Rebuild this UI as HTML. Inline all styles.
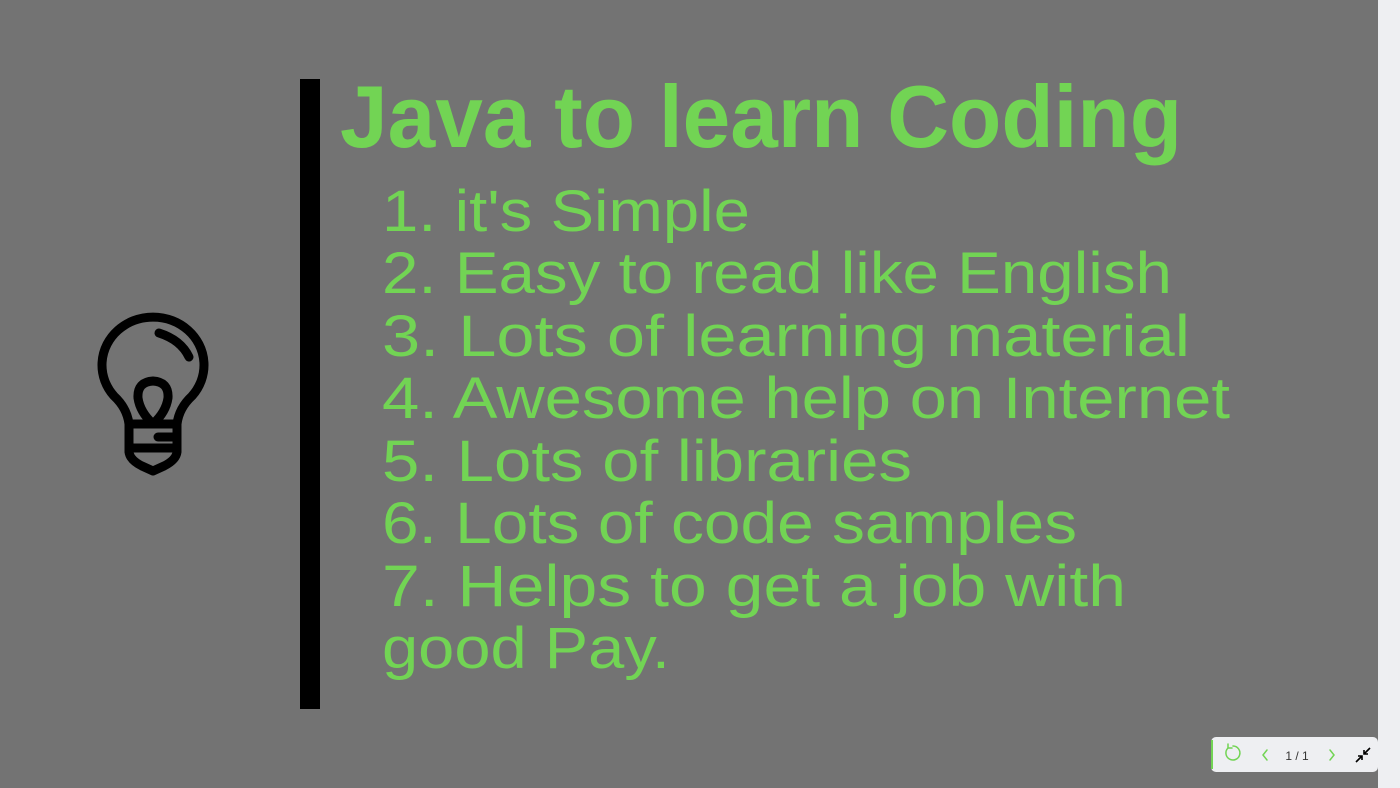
<!DOCTYPE html>
<html><head><meta charset="utf-8"><style>
html,body{margin:0;padding:0;width:1400px;height:788px;overflow:hidden;background:#737373}
svg{position:absolute;left:0;top:0}
</style></head><body>
<svg width="1400" height="788" viewBox="0 0 1400 788">
<rect x="0" y="0" width="1400" height="788" fill="#737373"/>
<rect x="1378" y="0" width="22" height="788" fill="#eeeff2"/>
<rect x="300" y="79" width="20" height="630" fill="#000"/>
<g font-family="Liberation Sans, sans-serif" fill="#72d454">
<text x="340" y="147" font-size="88" font-weight="bold" textLength="842" lengthAdjust="spacingAndGlyphs">Java to learn Coding</text>
<g font-size="58">
<text x="382" y="231" textLength="368" lengthAdjust="spacingAndGlyphs">1. it's Simple</text>
<text x="382" y="293" textLength="790" lengthAdjust="spacingAndGlyphs">2. Easy to read like English</text>
<text x="382" y="356" textLength="808" lengthAdjust="spacingAndGlyphs">3. Lots of learning material</text>
<text x="382" y="418" textLength="848" lengthAdjust="spacingAndGlyphs">4. Awesome help on Internet</text>
<text x="382" y="481" textLength="530" lengthAdjust="spacingAndGlyphs">5. Lots of libraries</text>
<text x="382" y="543" textLength="695" lengthAdjust="spacingAndGlyphs">6. Lots of code samples</text>
<text x="382" y="606" textLength="744" lengthAdjust="spacingAndGlyphs">7. Helps to get a job with</text>
<text x="382" y="668" textLength="288" lengthAdjust="spacingAndGlyphs">good Pay.</text>
</g></g>
<g fill="none" stroke="#000" stroke-width="9" stroke-linecap="round" stroke-linejoin="round">
<path d="M129 424 Q127 408 114 396 A51 48 0 1 1 192 396 Q179 408 177 424 Z"/>
<path d="M129 424 L129 452 Q130 460 142 466 L153 471 L164 466 Q176 460 177 452 L177 424"/>
<path d="M129 448 L177 448"/>
<path d="M153 424 Q140 412 138 398 Q137 382 153 381 Q169 382 168 398 Q166 412 153 424"/>
<path d="M158 437 L174 437"/>
<path d="M159 333 Q181 340 189 357"/>
</g>
<rect x="1211" y="737" width="167" height="35" rx="5" fill="#eeeff2"/>
<rect x="1211" y="740" width="2" height="29" fill="#72d454"/>
<g fill="none" stroke="#72d454" stroke-width="1.5" stroke-linecap="round">
<path d="M1228 748 A7 7 0 1 0 1233 746"/>
<path d="M1228 744 L1228 748 L1232 748"/>
<path d="M1267 750 L1263 755 L1267 760"/>
<path d="M1330 750 L1334 755 L1330 760"/>
</g>
<text x="1297" y="760" font-family="Liberation Sans, sans-serif" font-size="12" fill="#333" text-anchor="middle">1 / 1</text>
<g stroke="#000" stroke-width="1.6" fill="none">
<path d="M1370 748 L1364 754 M1364 750 L1364 754 L1368 754"/>
<path d="M1356 762 L1362 756 M1358 756 L1362 756 L1362 760"/>
</g>
</svg>
</body></html>
